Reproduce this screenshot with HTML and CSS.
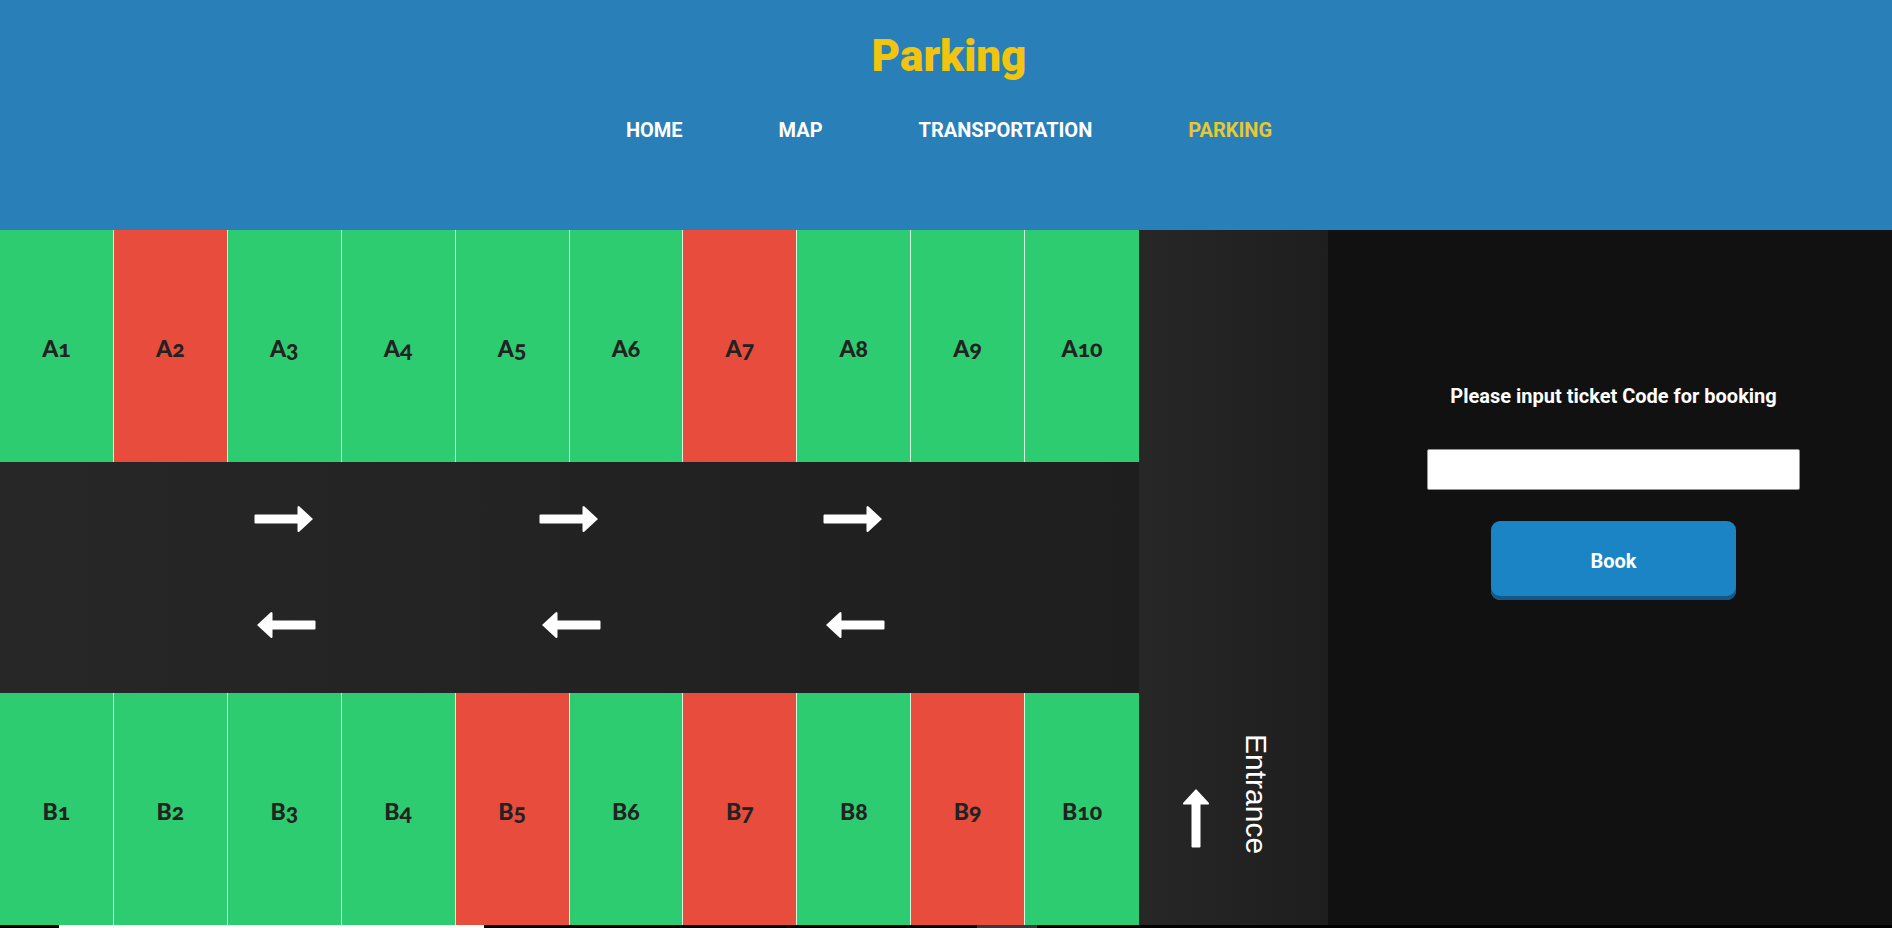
FILE: index.html
```html
<!DOCTYPE html>
<html lang="en">
<head>
<meta charset="utf-8">
<title>Parking</title>
<link rel="stylesheet" href="styles.css">
</head>
<body>
<svg class="defs" width="0" height="0" aria-hidden="true">
  <symbol id="arrow" viewBox="0 0 60 28">
    <path d="M1.500 9.500H43.500V2.500Q43.500 0 45.500 1.500L59 14L45.500 26.500Q43.500 28 43.500 25.500V18.500H1.500Q.5 18.500 .5 17.500V10.500Q.5 9.500 1.500 9.500Z" fill="#fff"/>
  </symbol>
</svg>
<header class="header">
  <h1 class="title">Parking</h1>
  <nav class="nav">
    <a href="#">HOME</a>
    <a href="#">MAP</a>
    <a href="#">TRANSPORTATION</a>
    <a href="#" class="active" aria-current="page">PARKING</a>
  </nav>
</header>
<main class="main">
  <section class="lot">
    <div class="row">
      <button class="slot">A1</button>
      <button class="slot taken">A2</button>
      <button class="slot">A3</button>
      <button class="slot">A4</button>
      <button class="slot">A5</button>
      <button class="slot">A6</button>
      <button class="slot taken">A7</button>
      <button class="slot">A8</button>
      <button class="slot">A9</button>
      <button class="slot">A10</button>
    </div>
    <div class="road">
      <div class="lane">
        <svg class="arrow"><use href="#arrow"/></svg>
        <svg class="arrow"><use href="#arrow"/></svg>
        <svg class="arrow"><use href="#arrow"/></svg>
      </div>
      <div class="lane back">
        <svg class="arrow"><use href="#arrow"/></svg>
        <svg class="arrow"><use href="#arrow"/></svg>
        <svg class="arrow"><use href="#arrow"/></svg>
      </div>
    </div>
    <div class="row">
      <button class="slot">B1</button>
      <button class="slot">B2</button>
      <button class="slot">B3</button>
      <button class="slot">B4</button>
      <button class="slot taken">B5</button>
      <button class="slot">B6</button>
      <button class="slot taken">B7</button>
      <button class="slot">B8</button>
      <button class="slot taken">B9</button>
      <button class="slot">B10</button>
    </div>
  </section>
  <section class="entrance">
    <svg class="arrow-up" viewBox="0 0 28 60"><use href="#arrow" width="60" height="28" transform="translate(0 60) rotate(-90)"/></svg>
    <span class="entrance-label">Entrance</span>
  </section>
  <form class="booking">
    <label class="booking-label" for="code">Please input ticket Code for booking</label>
    <input class="code" id="code" type="text">
    <button class="book" type="button">Book</button>
  </form>
</main>
<footer class="strip"><span class="strip-light"></span><span class="strip-dim"></span></footer>
</body>
</html>
```
FILE: styles.css
```css
* { box-sizing: border-box; }
body {
  margin: 0;
  min-height: 100vh;
  display: flex;
  flex-direction: column;
  background: #111;
  font-family: Roboto, "Liberation Sans", sans-serif;
  font-weight: 700;
}
.defs { position: absolute; }
.header {
  padding: 28px 0 86px 6px;
  background: #2980b9;
  text-align: center;
}
.title {
  margin: 0 0 32px;
  color: #f1c40f;
  font-size: 44px;
  font-weight: 900;
  line-height: 56px;
}
.nav {
  display: flex;
  justify-content: center;
  gap: 96px;
  font-size: 20px;
  line-height: 28px;
}
.nav a { color: #fff; text-decoration: none; }
.nav .active { color: #e6c92f; }
.main {
  flex: 1;
  display: grid;
  grid-template-columns: 1139fr 189fr 564fr;
}
.lot {
  display: grid;
  grid-template-rows: 1fr 1fr 1fr;
}
.row {
  display: grid;
  grid-template-columns: repeat(10, 1fr);
}
.slot {
  padding: 4px 0 0;
  border: 0;
  border-right: 1px solid #d5f5e3;
  background: #2ecc71;
  color: #222;
  font: 900 23px/28px Lato, sans-serif;
  font-variant-numeric: oldstyle-nums;
}
.slot:last-child { border-right: 0; }
.taken { background: #e74c3c; }
.road {
  display: flex;
  flex-direction: column;
  justify-content: center;
  gap: 78px;
  padding-bottom: 10px;
  background: linear-gradient(90deg, #272727, #1e1e1e);
}
.lane {
  display: grid;
  grid-template-columns: repeat(3, 1fr);
  justify-items: center;
  padding: 0 calc(12.5% + 1px) 0 calc(12.5% - 1px);
}
.arrow { width: 60px; height: 28px; }
.back { padding: 0 calc(12.5% - 1px) 0 calc(12.5% + 1px); }
.back .arrow { transform: scaleX(-1); }
.entrance {
  display: flex;
  justify-content: center;
  align-items: flex-end;
  gap: 26px;
  padding: 0 10px 71px 0;
  background: linear-gradient(90deg, #272727, #1e1e1e);
}
.arrow-up { width: 28px; height: 60px; margin-bottom: 6px; }
.entrance-label {
  writing-mode: vertical-rl;
  color: #fff;
  font: 400 30px/40px "Liberation Sans", sans-serif;
}
.booking {
  display: flex;
  flex-direction: column;
  align-items: center;
  padding: 152px 0 0 7px;
  color: #fff;
  font-size: 20px;
}
.booking-label { line-height: 28px; }
.code {
  width: 67%;
  height: 41px;
  margin: 39px 0 31px;
  padding: 0 8px;
  border: 1px solid #6a9be0;
  border-radius: 2px;
  background: #fff;
  font: inherit;
  color: #222;
}
.book {
  width: 245px;
  height: 79px;
  border: 0;
  border-radius: 9px;
  background: #1a84c5;
  box-shadow: inset 0 -4px #145888;
  color: #fff;
  font: inherit;
}
.strip {
  display: flex;
  height: 3px;
  padding-left: 59px;
  gap: 493px;
  background: #000;
}
.strip-light { width: 425px; background: #fff; }
.strip-dim { width: 60px; background: #3a3a3a; }
```
